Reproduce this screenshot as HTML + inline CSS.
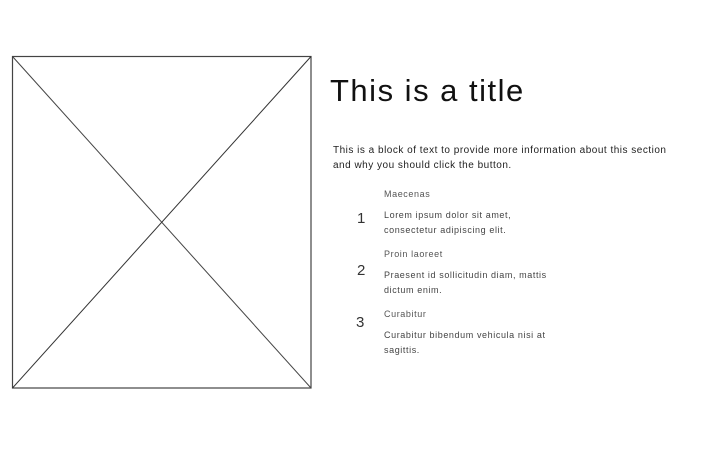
<!DOCTYPE html>
<html><head><meta charset="utf-8"><style>
body{margin:0;width:710px;height:460px;background:#fff;position:relative;overflow:hidden;font-family:"Liberation Sans",sans-serif;color:#222}
.a{position:absolute;white-space:nowrap}
</style></head><body>
<svg class="a" style="left:0;top:0" width="710" height="460">
<rect x="12.5" y="56.5" width="298.5" height="331.5" fill="none" stroke="#444" stroke-width="1.2"/>
<line x1="12.5" y1="56.5" x2="311" y2="388" stroke="#444" stroke-width="1"/>
<line x1="311" y1="56.5" x2="12.5" y2="388" stroke="#333" stroke-width="1"/>
</svg>
<div class="a" style="left:330px;top:73px;font-size:31px;font-weight:300;color:#111;letter-spacing:1.5px">This is a title</div>
<div class="a" style="left:333px;top:143px;font-size:10px;line-height:15px;color:#222;letter-spacing:0.5px">This is a block of text to provide more information about this section<br>and why you should click the button.</div>
<div class="a" style="left:357px;top:210px;font-size:15px;color:#333">1</div>
<div class="a" style="left:357px;top:262px;font-size:15px;color:#333">2</div>
<div class="a" style="left:356px;top:314px;font-size:15px;color:#333">3</div>
<div class="a" style="left:384px;top:189px;font-size:9px;color:#555;letter-spacing:0.6px">Maecenas</div>
<div class="a" style="left:384px;top:208px;font-size:9px;line-height:15px;color:#444;letter-spacing:0.6px">Lorem ipsum dolor sit amet,<br>consectetur adipiscing elit.</div>
<div class="a" style="left:384px;top:249px;font-size:9px;color:#555;letter-spacing:0.6px">Proin laoreet</div>
<div class="a" style="left:384px;top:268px;font-size:9px;line-height:15px;color:#444;letter-spacing:0.6px">Praesent id sollicitudin diam, mattis<br>dictum enim.</div>
<div class="a" style="left:384px;top:309px;font-size:9px;color:#555;letter-spacing:0.6px">Curabitur</div>
<div class="a" style="left:384px;top:328px;font-size:9px;line-height:15px;color:#444;letter-spacing:0.6px">Curabitur bibendum vehicula nisi at<br>sagittis.</div>
</body></html>
